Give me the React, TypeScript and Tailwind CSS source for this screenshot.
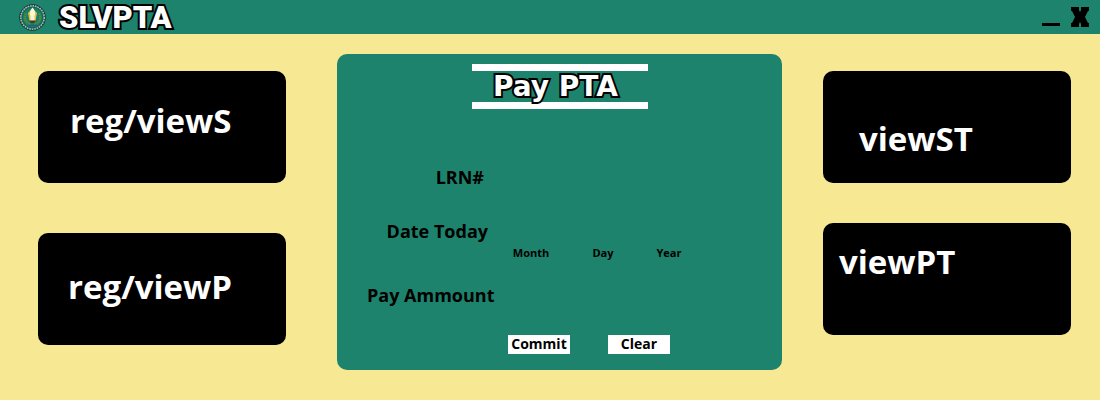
import type { ReactNode } from "react";

function Seal() {
  return (
    <svg viewBox="0 0 54 54" className="size-[27px] shrink-0" role="img" aria-label="School seal">
      <circle cx="27" cy="27" r="25" fill="#1c7a66" stroke="#12302c" strokeWidth="3" />
      <circle cx="27" cy="27" r="23.5" fill="none" stroke="#a9bfb8" strokeWidth="3" strokeDasharray="3.2 1.8" />
      <circle cx="27" cy="27" r="20.5" fill="#17806a" stroke="#274f49" strokeWidth="1.5" />
      <path d="M14 19 C8 29 14 38 24 40" fill="none" stroke="#5f8a3a" strokeWidth="4.5" strokeDasharray="3 1.5" />
      <path d="M40 19 C46 29 40 38 30 40" fill="none" stroke="#5f8a3a" strokeWidth="4.5" strokeDasharray="3 1.5" />
      <path d="M18 18 L21 34 H33 L36 18 L27 9 Z" fill="#e8c23c" />
      <path d="M27 7 C20 15 20 25 27 26 C34 25 34 15 27 7 Z" fill="#fff8d8" />
      <rect x="23" y="24" width="8" height="9" fill="#f4f1e4" />
      <path d="M20 33 H34 L30 38 H24 Z" fill="#4b3a20" />
      <path d="M18 43 H36" stroke="#235a8a" strokeWidth="3" />
    </svg>
  );
}

function Panel({ className, children }: { className: string; children: ReactNode }) {
  return (
    <button
      type="button"
      className={`flex h-28 w-full items-start rounded-[10px] bg-black text-left text-[33px] leading-[42px] font-bold whitespace-nowrap text-white ${className}`}
    >
      {children}
    </button>
  );
}

function DatePart({ id, label, className }: { id: string; label: string; className: string }) {
  return (
    <div className={`flex flex-col items-center gap-0.5 ${className}`}>
      <input id={id} inputMode="numeric" className="h-6 w-full bg-transparent text-center text-sm outline-none" />
      <label htmlFor={id} className="text-[11px] leading-4 font-bold">
        {label}
      </label>
    </div>
  );
}

const fieldLabel = "text-right text-[18px] leading-6 font-bold whitespace-nowrap";
const fieldInput = "h-6 w-full bg-transparent text-sm outline-none";
const action = "flex h-[19px] w-[62px] justify-center bg-white text-[14px] leading-[17px] font-bold";
const outlined = "text-white [-webkit-text-stroke:4px_black] [paint-order:stroke_fill]";

export default function App() {
  return (
    <div className="min-h-screen bg-[#f7e894] font-['Open_Sans',sans-serif] text-black">
      <header className="flex h-[34px] items-center justify-between bg-[#1d836c] pr-2.5 pl-[19px]">
        <div className="flex items-center gap-[13px]">
          <Seal />
          <h1 className={`pt-0.5 font-['Roboto',sans-serif] text-[31px] leading-8 font-black ${outlined}`}>SLVPTA</h1>
        </div>
        <div className="flex items-center gap-2.5">
          <button type="button" aria-label="Minimize" className="flex h-6 w-[18px] items-end pb-[3px]">
            <span className="h-[3px] w-full bg-black" />
          </button>
          <button type="button" aria-label="Close" className="flex h-6 w-5 items-center justify-center">
            <svg viewBox="0 0 20 20" className="size-5">
              <path d="M1 0H9V3L10 5L11 3V0H19V4H18L15 10L18 16H19V20H11V17L10 15L9 17V20H1V16H2L5 10L2 4H1Z" />
            </svg>
          </button>
        </div>
      </header>

      <main className="grid grid-cols-[258fr_445fr_248fr] items-start gap-x-[41px] pt-5 pr-[29px] pb-[30px] pl-[38px]">
        <nav className="flex flex-col gap-[50px] pt-[17px] pr-2.5">
          <Panel className="pt-[29px] pl-8">reg/viewS</Panel>
          <Panel className="pt-[33px] pl-[30px]">reg/viewP</Panel>
        </nav>

        <section className="flex flex-col items-center rounded-[10px] bg-[#1d836c] pt-2.5 pb-4">
          <h2
            className={`w-44 border-y-7 border-white pr-2 text-center font-['DejaVu_Sans',sans-serif] text-[28px] leading-[31px] font-bold whitespace-nowrap ${outlined}`}
          >
            Pay PTA
          </h2>

          <form className="mt-14 grid w-[385px] grid-cols-[125px_1fr] gap-x-4" onSubmit={(e) => e.preventDefault()}>
            <label htmlFor="lrn" className={`${fieldLabel} pr-2`}>
              LRN#
            </label>
            <input id="lrn" className={fieldInput} />

            <label htmlFor="month" className={`${fieldLabel} mt-[30px] pr-1`}>
              Date Today
            </label>
            <div className="mt-[30px] flex gap-4">
              <DatePart id="month" label="Month" className="w-[46px]" />
              <DatePart id="day" label="Day" className="w-[66px]" />
              <DatePart id="year" label="Year" className="w-[34px]" />
            </div>

            <label htmlFor="amount" className={`${fieldLabel} mt-[22px]`}>
              Pay Ammount
            </label>
            <input id="amount" inputMode="decimal" className={`${fieldInput} mt-[22px]`} />

            <div className="col-start-2 mt-7 flex gap-[38px]">
              <button type="submit" className={action}>
                Commit
              </button>
              <button type="reset" className={action}>
                Clear
              </button>
            </div>
          </form>
        </section>

        <nav className="flex flex-col gap-10 pt-[17px]">
          <Panel className="pt-[47px] pl-9">viewST</Panel>
          <Panel className="pt-[18px] pl-4">viewPT</Panel>
        </nav>
      </main>
    </div>
  );
}
